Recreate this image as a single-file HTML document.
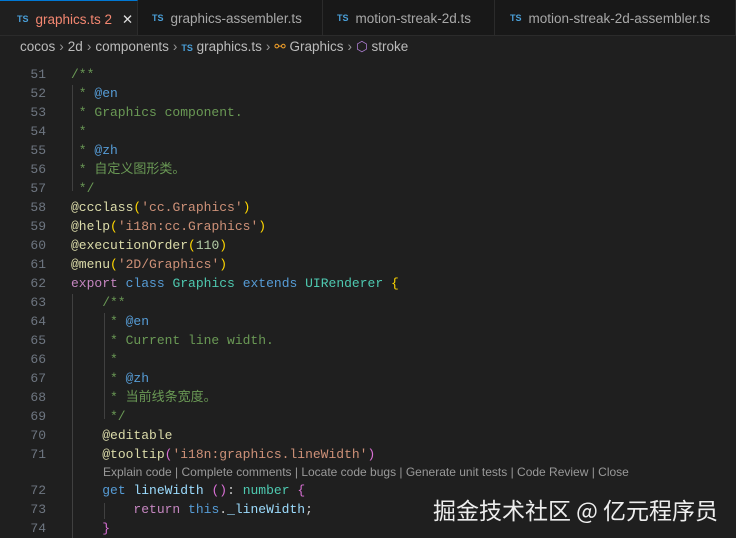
<!DOCTYPE html>
<html><head><meta charset="utf-8"><style>
body{margin:0;width:736px;height:537px;background:#1f1f1f;overflow:hidden;font-family:"Liberation Sans","Noto Sans CJK SC",sans-serif;position:relative}
.tabs{position:absolute;top:0;left:0;width:736px;height:35px;background:#181818;border-bottom:1px solid #2b2b2b}
.tab{position:absolute;top:0;height:35px;line-height:36px;font-size:13.5px;color:#a8a8a8;border-right:1px solid #2b2b2b;box-sizing:border-box;padding-left:17px}
.tab .ts{color:#4a9fd8;font-size:9px;font-weight:bold;margin-right:7px;vertical-align:2px}
.tab.act{background:#1f1f1f;color:#f48771;border-top:1px solid #0078d4}
.bc{position:absolute;top:36px;left:0;height:23px;line-height:22px;font-size:13.5px;color:#bbb;padding-left:20px}
.bc .s{color:#999;margin:0 4px}
.code{position:absolute;left:0;top:65px;font-family:"Liberation Mono","Noto Sans CJK SC",monospace;font-size:13px}
.l{height:19px;line-height:19px;white-space:pre;position:relative}
.n{position:absolute;left:0;width:46px;text-align:right;color:#6e7681}
.t{position:absolute;left:71px;color:#ccc}
.c{color:#6a9955}.k{color:#569cd6}.f{color:#dcdcaa}.s2{color:#ce9178}.y{color:#ffd700}.cl{color:#4ec9b0}.p{color:#da70d6}.v{color:#9cdcfe}.cf{color:#c586c0}
.lens{height:17px;line-height:17px;font-family:"Liberation Sans",sans-serif;font-size:12px;color:#999;padding-left:103px}
.guide{position:absolute;width:1px;background:#404040}
.wm{position:absolute;left:433px;top:492px;font-size:23px;color:#eee;font-family:"Noto Sans CJK SC",sans-serif}
</style></head><body>
<div class="tabs">
<div class="tab act" style="left:0;width:138px"><span class="ts">TS</span>graphics.ts 2 <span style="color:#ddd;margin-left:6px">✕</span></div>
<div class="tab" style="left:138px;width:185px;padding-left:14px"><span class="ts">TS</span>graphics-assembler.ts</div>
<div class="tab" style="left:323px;width:172px;padding-left:14px"><span class="ts">TS</span>motion-streak-2d.ts</div>
<div class="tab" style="left:495px;width:241px;padding-left:15px"><span class="ts">TS</span>motion-streak-2d-assembler.ts</div>
</div>
<div class="bc">cocos<span class="s">›</span>2d<span class="s">›</span>components<span class="s">›</span><span style="color:#4a9fd8;font-size:9px;font-weight:bold">TS</span> graphics.ts<span class="s">›</span><span style="color:#ee9d28">⚯</span> Graphics<span class="s">›</span><span style="color:#b180d7">⬡</span> stroke</div>
<div class="guide" style="left:72px;top:85px;height:106px"></div>
<div class="guide" style="left:72px;top:294px;height:244px"></div>
<div class="guide" style="left:104px;top:313px;height:106px"></div>
<div class="guide" style="left:104px;top:503px;height:16px"></div>
<div class="code">
<div class="l"><span class="n">51</span><span class="t c">/**</span></div>
<div class="l"><span class="n">52</span><span class="t c"> * <span class="k">@en</span></span></div>
<div class="l"><span class="n">53</span><span class="t c"> * Graphics component.</span></div>
<div class="l"><span class="n">54</span><span class="t c"> *</span></div>
<div class="l"><span class="n">55</span><span class="t c"> * <span class="k">@zh</span></span></div>
<div class="l"><span class="n">56</span><span class="t c"> * 自定义图形类。</span></div>
<div class="l"><span class="n">57</span><span class="t c"> */</span></div>
<div class="l"><span class="n">58</span><span class="t"><span class="f">@ccclass</span><span class="y">(</span><span class="s2">'cc.Graphics'</span><span class="y">)</span></span></div>
<div class="l"><span class="n">59</span><span class="t"><span class="f">@help</span><span class="y">(</span><span class="s2">'i18n:cc.Graphics'</span><span class="y">)</span></span></div>
<div class="l"><span class="n">60</span><span class="t"><span class="f">@executionOrder</span><span class="y">(</span><span style="color:#b5cea8">110</span><span class="y">)</span></span></div>
<div class="l"><span class="n">61</span><span class="t"><span class="f">@menu</span><span class="y">(</span><span class="s2">'2D/Graphics'</span><span class="y">)</span></span></div>
<div class="l"><span class="n">62</span><span class="t"><span class="cf">export</span> <span class="k">class</span> <span class="cl">Graphics</span> <span class="k">extends</span> <span class="cl">UIRenderer</span> <span class="y">{</span></span></div>
<div class="l"><span class="n">63</span><span class="t c">    /**</span></div>
<div class="l"><span class="n">64</span><span class="t c">     * <span class="k">@en</span></span></div>
<div class="l"><span class="n">65</span><span class="t c">     * Current line width.</span></div>
<div class="l"><span class="n">66</span><span class="t c">     *</span></div>
<div class="l"><span class="n">67</span><span class="t c">     * <span class="k">@zh</span></span></div>
<div class="l"><span class="n">68</span><span class="t c">     * 当前线条宽度。</span></div>
<div class="l"><span class="n">69</span><span class="t c">     */</span></div>
<div class="l"><span class="n">70</span><span class="t">    <span class="f">@editable</span></span></div>
<div class="l"><span class="n">71</span><span class="t">    <span class="f">@tooltip</span><span class="p">(</span><span class="s2">'i18n:graphics.lineWidth'</span><span class="p">)</span></span></div>
<div class="lens">Explain code | Complete comments | Locate code bugs | Generate unit tests | Code Review | Close</div>
<div class="l"><span class="n">72</span><span class="t">    <span class="k">get</span> <span class="v">lineWidth</span> <span class="p">()</span>: <span class="cl">number</span> <span class="p">{</span></span></div>
<div class="l"><span class="n">73</span><span class="t">        <span class="cf">return</span> <span class="k">this</span>.<span class="v">_lineWidth</span>;</span></div>
<div class="l"><span class="n">74</span><span class="t">    <span class="p">}</span></span></div>
</div>
<div class="wm">掘金技术社区 @ 亿元程序员</div>
</body></html>
